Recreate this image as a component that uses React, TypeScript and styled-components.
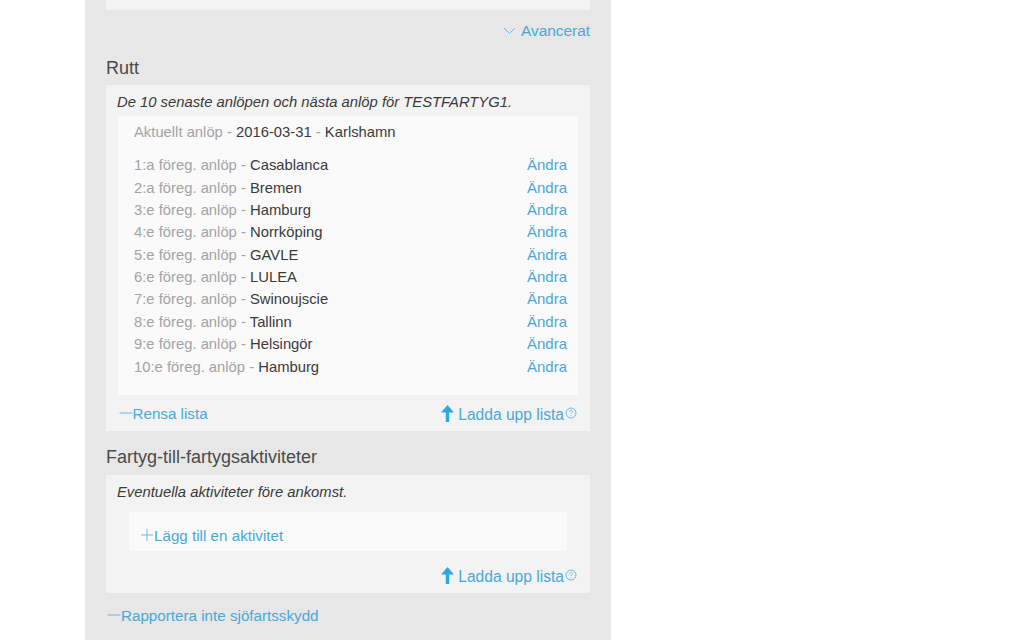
import React from 'react'
import styled, { createGlobalStyle } from 'styled-components'

const GlobalStyle = createGlobalStyle`
  html, body {
    margin: 0;
    padding: 0;
    background: #fff;
    height: 640px;
    overflow: hidden;
  }
  body {
    font-family: "Liberation Sans", Arial, sans-serif;
    font-size: 14.8px;
    color: #3a3a3a;
  }
`

const ports = [
  ['1:a', 'Casablanca'],
  ['2:a', 'Bremen'],
  ['3:e', 'Hamburg'],
  ['4:e', 'Norrköping'],
  ['5:e', 'GAVLE'],
  ['6:e', 'LULEA'],
  ['7:e', 'Swinoujscie'],
  ['8:e', 'Tallinn'],
  ['9:e', 'Helsingör'],
  ['10:e', 'Hamburg'],
]

const DashIcon = () => (
  <LineSvg viewBox="0 0 14 14">
    <path d="M0.5 7h13" stroke="#6bb8de" strokeWidth="1" fill="none" />
  </LineSvg>
)

const CrossIcon = () => (
  <LineSvg viewBox="0 0 14 14">
    <path d="M1 7h12M7 1v12" stroke="#6bb8de" strokeWidth="1" fill="none" />
  </LineSvg>
)

const ChevronIcon = () => (
  <ChevronSvg viewBox="0 0 13 8">
    <path d="M1 1l5.5 5.5L12 1" stroke="#6bb8de" strokeWidth="1" fill="none" />
  </ChevronSvg>
)

const UpArrowIcon = () => (
  <ArrowSvg viewBox="0 0 13 17">
    <path d="M6.5 0L13 7.5H8.2V17H4.8V7.5H0z" fill="#2ea9de" />
  </ArrowSvg>
)

const HelpIcon = () => (
  <HelpSvg viewBox="0 0 12 12">
    <circle cx="6" cy="6" r="5" fill="none" stroke="#5db4dc" strokeWidth="0.9" />
    <path d="M4.5 4.8c0-2 3-2 3-.2 0 1.1-1.5 1.1-1.5 2.3" fill="none" stroke="#5db4dc" strokeWidth="0.8" />
    <circle cx="6" cy="8.5" r="0.5" fill="#5db4dc" />
  </HelpSvg>
)

const UploadLink = () => (
  <Upload>
    <UpArrowIcon />
    <span>Ladda upp lista</span>
    <HelpIcon />
  </Upload>
)

const App = () => {
  return (
    <Page>
      <GlobalStyle />
      <Column>
        <TopPanel />
        <AdvancedRow>
          <ChevronIcon />
          <Link>Avancerat</Link>
        </AdvancedRow>

        <Heading>Rutt</Heading>
        <Panel>
          <Intro>De 10 senaste anlöpen och nästa anlöp för TESTFARTYG1.</Intro>
          <RouteList>
            <Current>
              <Muted>Aktuellt anlöp - </Muted>2016-03-31<Muted> - </Muted>Karlshamn
            </Current>
            {ports.map(([order, name], i) => (
              <PortRow key={i}>
                <span>
                  <Muted>{order} föreg. anlöp - </Muted>
                  {name}
                </span>
                <Change>Ändra</Change>
              </PortRow>
            ))}
          </RouteList>
          <RouteFooter>
            <IconLink>
              <DashIcon />
              Rensa lista
            </IconLink>
            <UploadLink />
          </RouteFooter>
        </Panel>

        <SecondHeading>Fartyg-till-fartygsaktiviteter</SecondHeading>
        <ActivityPanel>
          <Intro>Eventuella aktiviteter före ankomst.</Intro>
          <ActivityBox>
            <IconLink>
              <CrossIcon />
              Lägg till en aktivitet
            </IconLink>
          </ActivityBox>
          <ActivityFooter>
            <UploadLink />
          </ActivityFooter>
        </ActivityPanel>

        <BottomLink>
          <DashIcon />
          Rapportera inte sjöfartsskydd
        </BottomLink>
      </Column>
    </Page>
  )
}

export default App

const Page = styled.div`
  width: 1024px;
  height: 640px;
  overflow: hidden;
  padding-left: 85px;
  box-sizing: border-box;
`

const Column = styled.div`
  width: 526px;
  height: 640px;
  padding: 0 21px;
  box-sizing: border-box;
  background: #e7e7e7;
`

const TopPanel = styled.div`
  height: 10px;
  background: #f3f3f3;
`

const Link = styled.span`
  color: #4aa8d6;
`

const AdvancedRow = styled.div`
  display: flex;
  justify-content: flex-end;
  align-items: center;
  gap: 5px;
  height: 17px;
  margin-top: 12px;
  line-height: 17px;
  font-size: 15.4px;
`

const Heading = styled.div`
  font-size: 18px;
  line-height: 20px;
  height: 20px;
  margin-top: 19px;
  color: #4a4a4a;
`

const SecondHeading = styled(Heading)`
  margin-top: 16px;
`

const Panel = styled.div`
  background: #f3f3f3;
  margin-top: 7px;
`

const ActivityPanel = styled(Panel)`
  margin-top: 8px;
`

const Intro = styled.div`
  padding: 9px 11px 0;
  height: 22px;
  line-height: 17px;
  font-style: italic;
`

const RouteList = styled.div`
  margin: 0 12px;
  padding: 8px 11px 15px 16px;
  background: #fafafa;
`

const Muted = styled.span`
  color: #a3a3a3;
`

const Current = styled.div`
  line-height: 17px;
  height: 17px;
  margin-bottom: 15.2px;
`

const PortRow = styled.div`
  display: flex;
  justify-content: space-between;
  align-items: baseline;
  height: 22.38px;
  line-height: 17px;
`

const Change = styled(Link)`
  font-size: 15px;
`

const RouteFooter = styled.div`
  display: flex;
  justify-content: space-between;
  align-items: center;
  height: 36px;
  padding: 1px 12px 0 12.5px;
  box-sizing: border-box;
`

const IconLink = styled.div`
  display: flex;
  align-items: center;
  color: #4aa8d6;
  line-height: 17px;
  font-size: 15.2px;
`

const Upload = styled(IconLink)`
  gap: 4px;
  font-size: 15.6px;
  padding-top: 2px;
`

const LineSvg = styled.svg`
  width: 14px;
  height: 14px;
  flex-shrink: 0;
`

const ChevronSvg = styled.svg`
  width: 13px;
  height: 8px;
`

const ArrowSvg = styled.svg`
  width: 13px;
  height: 17px;
  margin-top: -1px;
`

const HelpSvg = styled.svg`
  width: 12px;
  height: 12px;
  margin: -3px 1px 0 -3px;
`

const ActivityBox = styled.div`
  display: flex;
  align-items: center;
  height: 39px;
  margin: 6px 23px 0;
  padding: 8px 0 0 11px;
  box-sizing: border-box;
  background: #fafafa;
`

const ActivityFooter = styled.div`
  display: flex;
  justify-content: flex-end;
  align-items: center;
  height: 42px;
  padding: 7px 12px 0;
  box-sizing: border-box;
`

const BottomLink = styled(IconLink)`
  margin-top: 14px;
  padding-left: 1px;
`
